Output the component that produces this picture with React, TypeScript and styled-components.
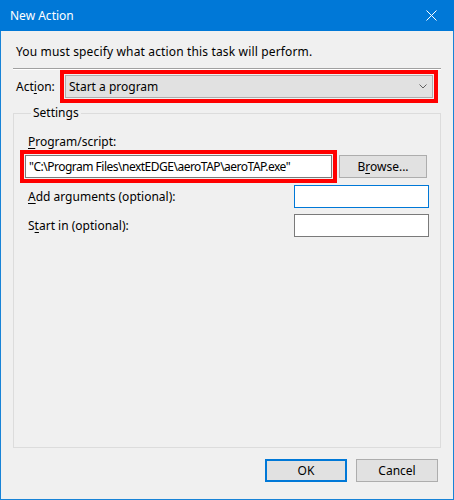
import styled, { createGlobalStyle } from "styled-components";

const GlobalStyle = createGlobalStyle`
  html, body {
    margin: 0;
    padding: 0;
    background: #ffffff;
  }
  body {
    font-family: "Noto Sans", "Liberation Sans", sans-serif;
    font-size: 12px;
    color: #000000;
  }
`;

const Window = styled.div`
  width: 454px;
  height: 500px;
  box-sizing: border-box;
  display: flex;
  flex-direction: column;
  border: 1px solid #1883d7;
  border-top: none;
  background: #f0f0f0;
`;

const TitleBar = styled.div`
  height: 31px;
  margin: 0 -1px;
  display: flex;
  align-items: center;
  justify-content: space-between;
  background: #0078d7;
  color: #ffffff;
  padding-left: 10px;
`;

const Title = styled.span`
  font-size: 12px;
  line-height: 16px;
`;

const CloseButton = styled.div`
  width: 46px;
  height: 31px;
  display: flex;
  align-items: center;
  justify-content: center;
  padding-left: 2px;
`;

const Body = styled.div`
  flex: 1;
  display: flex;
  flex-direction: column;
  padding: 13px 12px 17px 12px;
`;

const Intro = styled.div`
  line-height: 16px;
  padding-left: 3px;
  letter-spacing: 0.15px;
`;

const Separator = styled.div`
  margin-top: 8px;
  height: 0;
  border-top: 1px solid #a0a0a0;
  border-bottom: 1px solid #ffffff;
`;

const ActionRow = styled.div`
  display: flex;
  align-items: center;
  margin-top: 5px;
`;

const Label = styled.label<{ $width?: number }>`
  display: block;
  line-height: 16px;
  padding-left: 3px;
  width: ${(p) => (p.$width ? `${p.$width}px` : "auto")};
  box-sizing: border-box;
  flex-shrink: 0;
`;

const Key = styled.span`
  text-decoration: underline;
  text-underline-offset: 2px;
`;

const Combo = styled.div`
  width: 368px;
  height: 23px;
  box-sizing: border-box;
  display: flex;
  align-items: center;
  justify-content: space-between;
  padding: 0 5px 0 3px;
  background: #e1e1e1;
  border: 1px solid #adadad;
  outline: 4px solid #ff0000;
  outline-offset: 1px;
`;

const Group = styled.fieldset`
  flex: 1;
  margin: 7px 0 0 0;
  padding: 13px 11px 0 11px;
  border: 1px solid #dcdcdc;
  display: flex;
  flex-direction: column;
  min-width: 0;
`;

const Legend = styled.legend`
  padding: 0 2px;
  margin-left: 6px;
  line-height: 16px;
`;

const ProgramRow = styled.div`
  display: flex;
  align-items: center;
  gap: 7px;
  margin-top: 5px;
`;

const TextBox = styled.div<{ $focused?: boolean; $marked?: boolean }>`
  height: 23px;
  box-sizing: border-box;
  display: flex;
  align-items: center;
  padding: 0 3px;
  background: #ffffff;
  border: 1px solid ${(p) => (p.$focused ? "#0078d7" : "#7a7a7a")};
  outline: ${(p) => (p.$marked ? "4px solid #ff0000" : "none")};
  outline-offset: 1px;
  white-space: nowrap;
`;

const PathBox = styled(TextBox)`
  width: 307px;
  letter-spacing: -0.5px;
`;

const FieldBox = styled(TextBox)`
  width: 135px;
`;

const FieldRow = styled.div<{ $top: number }>`
  display: flex;
  align-items: center;
  justify-content: space-between;
  margin-top: ${(p) => p.$top}px;
`;

const Button = styled.button<{ $default?: boolean }>`
  width: 82px;
  height: 23px;
  box-sizing: border-box;
  margin: 0;
  padding: 0;
  font-family: inherit;
  font-size: 12px;
  color: #000000;
  background: #e1e1e1;
  border: ${(p) => (p.$default ? "2px solid #0078d7" : "1px solid #adadad")};
`;

const BrowseButton = styled(Button)`
  width: 88px;
`;

const Footer = styled.div`
  display: flex;
  justify-content: flex-end;
  gap: 9px;
  margin-top: 11px;
  padding-right: 3px;
`;

export default function App() {
  return (
    <>
      <GlobalStyle />
      <Window>
        <TitleBar>
          <Title>New Action</Title>
          <CloseButton>
            <svg width="11" height="11" viewBox="0 0 11 11">
              <path d="M0.5 0.5 L10.5 10.5 M10.5 0.5 L0.5 10.5" stroke="#ffffff" strokeWidth="1" />
            </svg>
          </CloseButton>
        </TitleBar>
        <Body>
          <Intro>You must specify what action this task will perform.</Intro>
          <Separator />
          <ActionRow>
            <Label $width={52}>
              Act<Key>i</Key>on:
            </Label>
            <Combo>
              <span>Start a program</span>
              <svg width="8" height="5" viewBox="0 0 8 5">
                <path d="M0.5 0.5 L4 4 L7.5 0.5" fill="none" stroke="#606060" strokeWidth="1" />
              </svg>
            </Combo>
          </ActionRow>
          <Group>
            <Legend>Settings</Legend>
            <Label>
              <Key>P</Key>rogram/script:
            </Label>
            <ProgramRow>
              <PathBox $marked>"C:\Program Files\nextEDGE\aeroTAP\aeroTAP.exe"</PathBox>
              <BrowseButton>
                B<Key>r</Key>owse...
              </BrowseButton>
            </ProgramRow>
            <FieldRow $top={7}>
              <Label>
                <Key>A</Key>dd arguments (optional):
              </Label>
              <FieldBox $focused />
            </FieldRow>
            <FieldRow $top={6}>
              <Label>
                S<Key>t</Key>art in (optional):
              </Label>
              <FieldBox />
            </FieldRow>
          </Group>
          <Footer>
            <Button $default>OK</Button>
            <Button>Cancel</Button>
          </Footer>
        </Body>
      </Window>
    </>
  );
}
